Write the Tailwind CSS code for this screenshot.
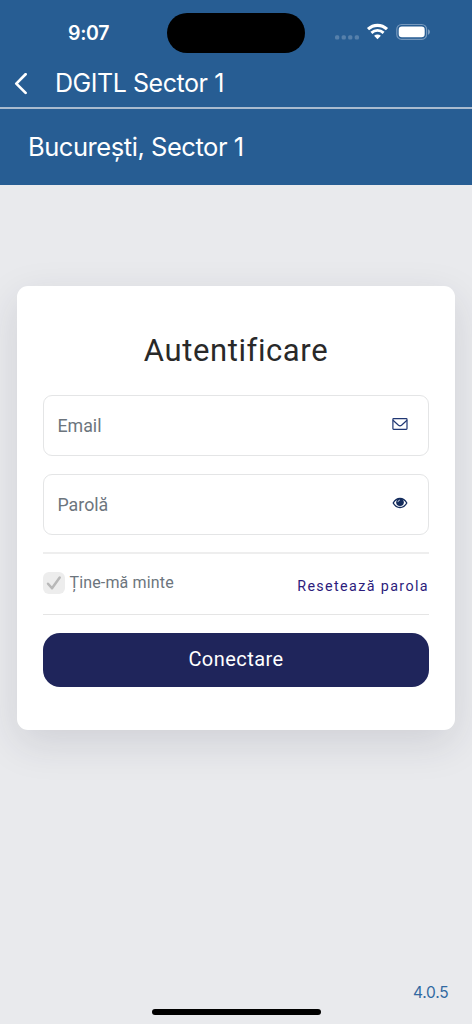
<!DOCTYPE html>
<html lang="ro">
<head>
<meta charset="utf-8">
<meta name="viewport" content="width=device-width, initial-scale=1">
<title>DGITL Sector 1</title>
<script src="https://cdn.jsdelivr.net/npm/@tailwindcss/browser@4"></script>
</head>
<body class="bg-[#e9eaed]">
<div class="flex h-[1024px] w-[472px] flex-col overflow-hidden bg-[#e9eaed] font-['Roboto',sans-serif]">
  <header class="h-[185px] shrink-0 bg-[#275d93] font-['Inter',sans-serif] text-white">
    <div class="flex h-[60px] items-start">
      <div class="w-[167px] pt-[20px] pl-[68px] text-[19.5px] leading-[26px] font-semibold tracking-[-0.3px]"><span>9:07</span></div>
      <div class="mt-[13px] h-[40px] w-[138px] rounded-full bg-black"></div>
      <div class="flex h-[60px] grow items-start pl-[30px]">
        <svg class="mt-[35px] h-[5px] w-[25px]" viewBox="0 0 25 5" fill="#5680ab"><rect x="0" y="0.2" width="4.3" height="4.3" rx="1.5"/><rect x="6.6" y="0.2" width="4.3" height="4.3" rx="1.5"/><rect x="13.1" y="0.2" width="4.3" height="4.3" rx="1.5"/><rect x="19.7" y="0.2" width="4.3" height="4.3" rx="1.5"/></svg>
        <svg class="mt-[23px] ml-[6px] h-[17px] w-[23px]" viewBox="0 0 23 17" fill="none" stroke="#fff"><path d="M2 6.2C7.5 1.1 15.5 1.1 21 6.2" stroke-width="3.1"/><path d="M5.4 9.9C9 6.6 14 6.6 17.6 9.9" stroke-width="2.8"/><path d="M11.5 16.2L8.1 12.8C10 11.2 13 11.2 14.9 12.8Z" fill="#fff" stroke="none"/></svg>
        <svg class="mt-[23px] ml-[7px] h-[18px] w-[35px]" viewBox="0 0 35 18"><rect x="0.8" y="1.5" width="29.8" height="14.8" rx="4.8" fill="none" stroke="#7598bd" stroke-width="1.2"/><rect x="2.7" y="3.5" width="26" height="10.8" rx="3.2" fill="#fff"/><path d="M32 6.3C34.6 7 34.6 11 32 11.7Z" fill="#7fa0c2"/></svg>
      </div>
    </div>
    <div class="flex h-[49px] items-center border-b-2 border-[#a9bbcf] pl-[14px]">
      <svg class="h-[22px] w-[14px]" viewBox="0 0 14 22" fill="none" stroke="#fff" stroke-width="2.7" stroke-linecap="round" stroke-linejoin="round"><path d="M11.6 1.2L2.3 10.6L11.6 19.9"/></svg>
      <h1 class="mb-[2px] ml-[27px] text-[25px] leading-[30px] font-normal tracking-[-0.45px] whitespace-nowrap">DGITL Sector 1</h1>
    </div>
    <h2 class="flex h-[76px] items-center pl-[28px] text-[25.5px] leading-[30px] font-normal tracking-[-0.45px] whitespace-nowrap">București, Sector 1</h2>
  </header>

  <main class="mx-[17px] mt-[101px] h-[444px] shrink-0 rounded-[11px] bg-white px-[26px] pt-[47px] shadow-[0_13px_40px_rgba(40,42,60,0.13)]">
    <h3 class="text-center text-[31px] leading-[36px] tracking-[0.6px] text-[#292929]">Autentificare</h3>
    <div class="mt-[26px] flex h-[61px] items-center justify-between rounded-[9px] border border-[#e4e5e6] pr-[20px] pl-[13.5px] text-[17.8px] text-[#6c757d]">
      <span class="mt-[2px]">Email</span>
      <svg class="mb-[3px] h-[12px] w-[16px]" viewBox="0 0 16 12" fill="none" stroke="#203773" stroke-width="1.2"><rect x="0.9" y="0.7" width="14.1" height="10.6" rx="0.7"/><path d="M1 2.2L6.5 7.2Q8 8.4 9.5 7.2L15 2.2"/></svg>
    </div>
    <div class="mt-[18px] flex h-[61px] items-center justify-between rounded-[9px] border border-[#e4e5e6] pr-[20px] pl-[13.5px] text-[17.8px] text-[#6c757d]">
      <span class="mt-[2px]">Parolă</span>
      <svg class="mb-[4px] h-[12px] w-[16px]" viewBox="0 0 16 12"><path d="M1.2 6C4.5 0 11.5 0 14.8 6C11.5 12 4.5 12 1.2 6Z" fill="none" stroke="#132b5c" stroke-width="1.3"/><circle cx="8" cy="5.3" r="3.8" fill="#132b5c"/><path d="M5.9 5.1Q6.1 3.2 8 3" fill="none" stroke="#dce2ec" stroke-width="0.8"/></svg>
    </div>
    <div class="mt-[17px] flex h-[63px] items-center justify-between border-t-2 border-b border-t-[#eeeeee] border-b-[#e5e5e5]">
      <label class="mb-[3px] flex items-center text-[16px] text-[#6c757d]">
        <svg class="h-[22px] w-[22px]" viewBox="0 0 22 22"><rect width="22" height="22" rx="6" fill="#ededed"/><path d="M5 11.7L9 16.3L16.7 5.5" fill="none" stroke="#b8b8b8" stroke-width="2.5" stroke-linecap="round" stroke-linejoin="round"/></svg>
        <span class="ml-[4.5px] tracking-[0.15px]">Ține-mă minte</span>
      </label>
      <a class="mt-[6px] text-[14.3px] tracking-[1.38px] text-[#2c1c7c]">Resetează parola</a>
    </div>
    <button class="mt-[18px] block h-[54px] w-full rounded-[17px] bg-[#1f255b] pb-[2px] text-[20px] tracking-[0.45px] text-white">Conectare</button>
  </main>

  <footer class="flex grow flex-col justify-end">
    <div class="pr-[23.5px] text-right font-['Inter',sans-serif] text-[15.5px] leading-[20px] tracking-[-0.2px] text-[#3169a1]">4.0.5</div>
    <div class="mx-auto mt-[6px] mb-[9px] h-[6px] w-[169px] rounded-full bg-black"></div>
  </footer>
</div>
</body>
</html>
